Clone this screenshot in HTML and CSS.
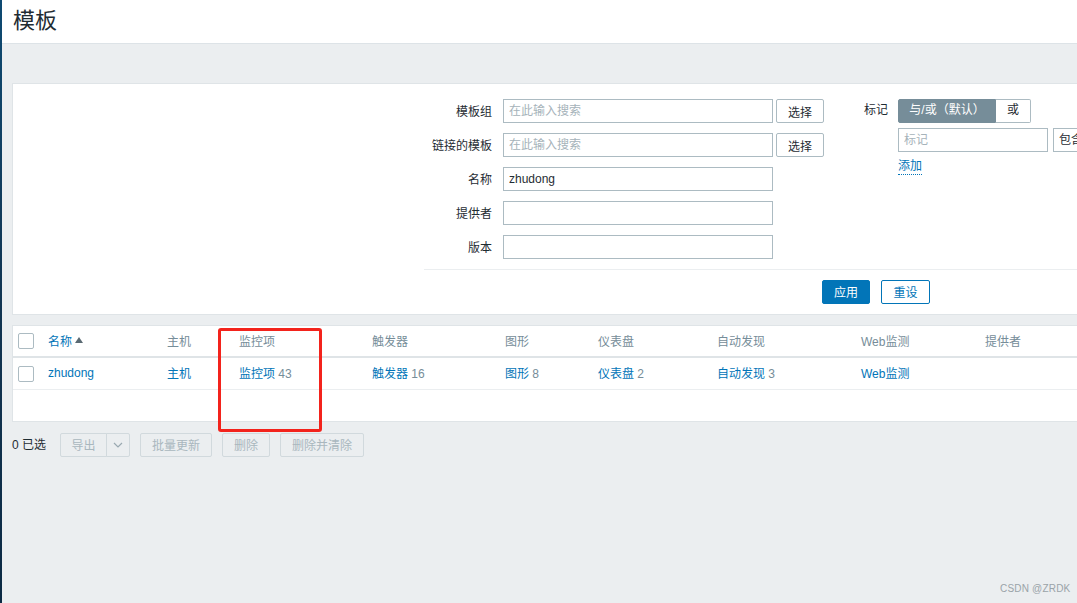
FILE: index.html
```html
<!DOCTYPE html>
<html lang="zh">
<head>
<meta charset="utf-8">
<title>模板</title>
<link rel="stylesheet" href="styles.css">
</head>
<body>
<div class="page">
  <div class="strip"></div>
  <div class="main">
    <header class="page-head"><h1>模板</h1></header>
    <div class="content">
      <section class="filter">
        <div class="filter-cols">
          <div class="col1">
            <label class="lbl">模板组</label>
            <input class="inp" type="text" placeholder="在此输入搜索">
            <button class="btn-sel">选择</button>

            <label class="lbl">链接的模板</label>
            <input class="inp" type="text" placeholder="在此输入搜索">
            <button class="btn-sel">选择</button>

            <label class="lbl">名称</label>
            <input class="inp" type="text" value="zhudong">
            <span></span>

            <label class="lbl">提供者</label>
            <input class="inp" type="text">
            <span></span>

            <label class="lbl">版本</label>
            <input class="inp" type="text">
            <span></span>
          </div>
          <div class="col2">
            <label class="lbl2">标记</label>
            <div class="tagbox">
              <div class="toggle">
                <span class="tg on">与/或（默认）</span><span class="tg off">或</span>
              </div>
              <div class="tagrow">
                <input class="inp tag" type="text" placeholder="标记">
                <span class="sel-op">包含</span>
              </div>
              <a class="add" href="#">添加</a>
            </div>
          </div>
        </div>
        <div class="filter-foot">
          <button class="btn-apply">应用</button>
          <button class="btn-reset">重设</button>
        </div>
      </section>

      <section class="list">
        <div class="row head">
          <div class="c chk"><span class="cb"></span></div>
          <div class="c name">名称<span class="arrow"></span></div>
          <div class="c">主机</div>
          <div class="c">监控项</div>
          <div class="c">触发器</div>
          <div class="c">图形</div>
          <div class="c">仪表盘</div>
          <div class="c">自动发现</div>
          <div class="c">Web监测</div>
          <div class="c">提供者</div>
        </div>
        <div class="row data">
          <div class="c chk"><span class="cb"></span></div>
          <div class="c"><a href="#">zhudong</a></div>
          <div class="c"><a href="#">主机</a></div>
          <div class="c"><a href="#">监控项</a> <span class="cnt">43</span></div>
          <div class="c"><a href="#">触发器</a> <span class="cnt">16</span></div>
          <div class="c"><a href="#">图形</a> <span class="cnt">8</span></div>
          <div class="c"><a href="#">仪表盘</a> <span class="cnt">2</span></div>
          <div class="c"><a href="#">自动发现</a> <span class="cnt">3</span></div>
          <div class="c"><a href="#">Web监测</a></div>
          <div class="c"></div>
        </div>
        <div class="empty"></div>
      </section>

      <div class="actions">
        <span class="selected">0 已选</span>
        <div class="split">
          <button class="btn-dis first">导出</button><button class="btn-dis drop"><svg width="10" height="6" viewBox="0 0 10 6"><path d="M1 1l4 4 4-4" fill="none" stroke="#9aa9b1" stroke-width="1.2"/></svg></button>
        </div>
        <button class="btn-dis w72">批量更新</button>
        <button class="btn-dis">删除</button>
        <button class="btn-dis w84">删除并清除</button>
      </div>
    </div>
  </div>
  <div class="mark"></div>
  <div class="watermark">CSDN @ZRDK</div>
</div>
</body>
</html>
```

FILE: styles.css
```css
html, body {
  margin: 0;
  padding: 0;
  overflow: hidden;
}
body {
  font-family: "Liberation Sans", "Noto Sans CJK SC", Arial, sans-serif;
  font-size: 12px;
  color: #1f2c33;
}
.page {
  position: relative;
  display: flex;
  width: 1077px;
  height: 603px;
  overflow: hidden;
}
.strip {
  flex: 0 0 2px;
  background: linear-gradient(#0e4a72, #123552 50%, #0c2a44);
}
.main {
  flex: 1;
  min-width: 0;
  background: #ebeef0;
  overflow: hidden;
}
.page-head {
  height: 43px;
  background: #fff;
  border-bottom: 1px solid #dde3e7;
  padding-left: 11px;
}
.page-head h1 {
  margin: 0;
  font-size: 22px;
  font-weight: normal;
  line-height: 42px;
  color: #1f2c33;
}
.content {
  padding: 39px 0 0 10px;
}
.filter {
  width: 1120px;
  background: #fff;
  border: 1px solid #dfe4e7;
  padding-top: 15px;
}
.filter-cols {
  display: flex;
  margin-left: 411px;
}
.col1 {
  display: grid;
  grid-template-columns: 79px 273px 48px;
  grid-auto-rows: 24px;
  row-gap: 10px;
  align-items: center;
}
.lbl {
  text-align: right;
  padding-right: 11px;
  padding-bottom: 2px;
  white-space: nowrap;
}
.inp {
  box-sizing: border-box;
  width: 270px;
  height: 24px;
  border: 1px solid #acbbc2;
  padding: 0 5px;
  font-family: inherit;
  font-size: 12px;
  color: #1f2c33;
  outline: none;
  margin: 0;
}
.inp::placeholder {
  color: #a6b3ba;
}
.btn-sel {
  box-sizing: border-box;
  height: 24px;
  width: 48px;
  border: 1px solid #acbbc2;
  border-radius: 2px;
  background: #fff;
  font-family: inherit;
  font-size: 12px;
  color: #1f2c33;
  padding: 0;
}
.col2 {
  display: flex;
  margin-left: 40px;
}
.lbl2 {
  width: 24px;
  line-height: 22px;
  margin-right: 10px;
  white-space: nowrap;
}
.tagbox {
  display: flex;
  flex-direction: column;
}
.toggle {
  display: flex;
  height: 24px;
}
.tg {
  box-sizing: border-box;
  height: 24px;
  line-height: 21px;
  text-align: center;
  border: 1px solid #768d99;
}
.tg.on {
  width: 98px;
  background: #768d99;
  color: #fff;
  border-radius: 2px 0 0 2px;
}
.tg.off {
  width: 35px;
  background: #fff;
  border-color: #acbbc2;
  border-left: none;
  border-radius: 0 2px 2px 0;
}
.tagrow {
  display: flex;
  margin-top: 5px;
  gap: 5px;
}
.inp.tag {
  width: 150px;
}
.sel-op {
  box-sizing: border-box;
  height: 24px;
  width: 80px;
  border: 1px solid #acbbc2;
  line-height: 22px;
  padding-left: 5px;
  white-space: nowrap;
  overflow: hidden;
}
.add {
  align-self: flex-start;
  margin-top: 7px;
  color: #0275b8;
  text-decoration: none;
  border-bottom: 1px dotted #0275b8;
  line-height: 15px;
}
.filter-foot {
  margin-left: 411px;
  margin-top: 10px;
  border-top: 1px solid #ebeef0;
  padding: 10px 0 10px 398px;
  display: flex;
  gap: 11px;
}
.btn-apply, .btn-reset {
  box-sizing: border-box;
  height: 24px;
  width: 48px;
  border-radius: 2px;
  font-family: inherit;
  font-size: 12px;
  padding: 0 0 1px;
}
.btn-apply {
  background: #0275b8;
  border: 1px solid #0275b8;
  color: #fff;
}
.btn-reset {
  width: 49px;
  background: #fff;
  border: 1px solid #0275b8;
  color: #0275b8;
}
.list {
  width: 1120px;
  margin-top: 10px;
  background: #fff;
  border: 1px solid #dfe4e7;
}
.row {
  display: grid;
  grid-template-columns: 35px 119px 72px 133px 133px 93px 119px 144px 124px 148px;
  align-items: center;
}
.row.head {
  height: 28px;
  padding-bottom: 2px;
  border-bottom: 2px solid #dfe4e7;
  color: #768d99;
}
.row.data {
  height: 29px;
  padding-bottom: 2px;
  border-bottom: 1px solid #ebeef0;
}
.row .chk {
  padding-top: 2px;
}
.c {
  white-space: nowrap;
}
.chk {
  padding-left: 5px;
  display: flex;
  align-items: center;
}
.cb {
  box-sizing: border-box;
  width: 16px;
  height: 16px;
  border: 1px solid #acbbc2;
  border-radius: 2px;
  background: #fff;
}
.name {
  color: #0275b8;
  display: flex;
  align-items: center;
}
.arrow {
  width: 0;
  height: 0;
  margin-left: 3px;
  border-left: 4px solid transparent;
  border-right: 4px solid transparent;
  border-bottom: 6px solid #5a6a73;
}
.row a {
  color: #0275b8;
  text-decoration: none;
}
.cnt {
  color: #768d99;
}
.empty {
  height: 31px;
}
.actions {
  display: flex;
  align-items: center;
  margin-top: 11px;
}
.selected {
  width: 48px;
  line-height: 22px;
}
.split {
  display: flex;
  margin-right: 10px;
}
.btn-dis {
  box-sizing: border-box;
  height: 24px;
  width: 48px;
  border: 1px solid #d1d9dd;
  border-radius: 2px;
  background: #ebeef0;
  color: #a9b7be;
  font-family: inherit;
  font-size: 12px;
  padding: 0 0 1px;
  margin-right: 10px;
}
.split .btn-dis {
  margin-right: 0;
}
.btn-dis.first {
  width: 47px;
  border-radius: 2px 0 0 2px;
}
.btn-dis.drop {
  width: 24px;
  border-left: 1px solid #d1d9dd;
  border-radius: 0 2px 2px 0;
  margin-left: -1px;
  display: flex;
  align-items: center;
  justify-content: center;
}
.btn-dis.w72 {
  width: 72px;
}
.btn-dis.w84 {
  width: 84px;
}
.mark {
  position: absolute;
  left: 218px;
  top: 328px;
  width: 98px;
  height: 98px;
  border: 3px solid #f3231c;
  border-radius: 3px;
}
.watermark {
  position: absolute;
  left: 1000px;
  top: 583px;
  font-size: 10px;
  color: #9aa3a8;
  letter-spacing: 0.2px;
}
```
